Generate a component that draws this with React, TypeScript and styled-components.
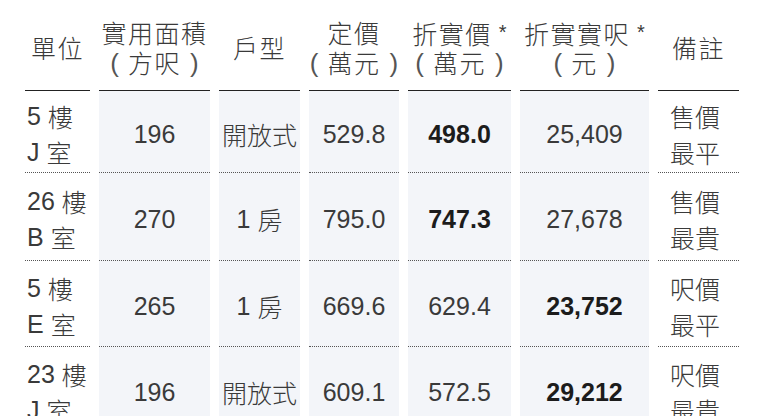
import React from 'react';
import styled, { createGlobalStyle } from 'styled-components';

const GlobalStyle = createGlobalStyle`
  * {
    box-sizing: border-box;
    margin: 0;
    padding: 0;
  }

  body {
    font-family: 'Liberation Sans', 'Noto Sans CJK TC', sans-serif;
    background-color: #ffffff;
    color: #333;
    overflow: hidden;
  }
`;

const Page = styled.div`
  width: 762px;
  height: 416px;
  overflow: hidden;
  padding-left: 25px;
`;

const Table = styled.div`
  display: grid;
  grid-template-columns: 65px 111px 81px 90px 103px 129px 81px;
  column-gap: 9px;
`;

const HeadCell = styled.div`
  height: 91px;
  padding-top: 4px;
  border-bottom: 1px solid #222;
  display: flex;
  flex-direction: column;
  align-items: center;
  justify-content: center;
  font-family: 'Noto Sans CJK TC', sans-serif;
  font-weight: 300;
  font-size: 25px;
  line-height: 30px;
  letter-spacing: 1.5px;
  color: #3a3a3a;
  white-space: nowrap;
`;

const HeadLine = styled.span`
  display: block;
  height: 30px;
`;

const Paren = styled.span`
  font-family: 'Liberation Sans', sans-serif;
  font-weight: 300;
  font-size: 26px;
  letter-spacing: 0;
  color: #555;
  margin: 0 9px;
  vertical-align: 1px;
`;

const Star = styled.span`
  font-family: 'Liberation Sans', sans-serif;
  font-size: 20px;
  letter-spacing: 0;
  vertical-align: 5px;
  margin-left: 7px;
`;

const Cell = styled.div<{ $shaded?: boolean; $align?: string; $h: number }>`
  height: ${(p) => p.$h}px;
  padding-top: 6px;
  border-bottom: 1px dotted #555;
  background-color: ${(p) => (p.$shaded ? '#f3f5f9' : '#ffffff')};
  display: flex;
  align-items: center;
  justify-content: ${(p) => p.$align || 'center'};
  padding-left: ${(p) => (p.$align === 'flex-start' ? '2px' : '0')};
  font-size: 25px;
  line-height: 1;
  color: #383838;
  white-space: nowrap;
`;

const Stack = styled.div<{ $indent?: number }>`
  display: flex;
  flex-direction: column;
  gap: 11px;
  padding-left: ${(p) => p.$indent || 0}px;
`;

const Line = styled.span`
  display: flex;
  align-items: center;
  height: 25px;
`;

const Han = styled.span`
  font-family: 'Noto Sans CJK TC', sans-serif;
  font-weight: 300;
  color: #3a3a3a;
  line-height: 1;
`;

const Num = styled.span<{ $bold?: boolean; $gap?: boolean }>`
  font-family: 'Liberation Sans', sans-serif;
  font-weight: ${(p) => (p.$bold ? 700 : 400)};
  color: ${(p) => (p.$bold ? '#1c1c1c' : '#3a3a3a')};
  line-height: 1;
  margin-right: ${(p) => (p.$gap ? '7px' : '0')};
`;

type Row = {
  h: number;
  floor: string;
  room: string;
  area: string;
  type: string;
  price: string;
  net: string;
  netBold: boolean;
  psf: string;
  psfBold: boolean;
  note: [string, string];
};

const rows: Row[] = [
  { h: 82, floor: '5', room: 'J', area: '196', type: '開放式', price: '529.8', net: '498.0', netBold: true, psf: '25,409', psfBold: false, note: ['售價', '最平'] },
  { h: 88, floor: '26', room: 'B', area: '270', type: '1 房', price: '795.0', net: '747.3', netBold: true, psf: '27,678', psfBold: false, note: ['售價', '最貴'] },
  { h: 86, floor: '5', room: 'E', area: '265', type: '1 房', price: '669.6', net: '629.4', netBold: false, psf: '23,752', psfBold: true, note: ['呎價', '最平'] },
  { h: 86, floor: '23', room: 'J', area: '196', type: '開放式', price: '609.1', net: '572.5', netBold: false, psf: '29,212', psfBold: true, note: ['呎價', '最貴'] },
];

const TypeText: React.FC<{ value: string }> = ({ value }) => {
  if (value.startsWith('1 ')) {
    return (
      <Line>
        <Num $gap>1</Num>
        <Han>{value.slice(2)}</Han>
      </Line>
    );
  }
  return <Han>{value}</Han>;
};

const Unit: React.FC<{ text: string }> = ({ text }) => (
  <HeadLine>
    <Paren>(</Paren>
    {text}
    <Paren>)</Paren>
  </HeadLine>
);

export default function App() {
  return (
    <>
      <GlobalStyle />
      <Page>
        <Table>
          <HeadCell>單位</HeadCell>
          <HeadCell>
            <HeadLine>實用面積</HeadLine>
            <Unit text="方呎" />
          </HeadCell>
          <HeadCell>戶型</HeadCell>
          <HeadCell>
            <HeadLine>定價</HeadLine>
            <Unit text="萬元" />
          </HeadCell>
          <HeadCell>
            <HeadLine>
              折實價<Star>*</Star>
            </HeadLine>
            <Unit text="萬元" />
          </HeadCell>
          <HeadCell>
            <HeadLine>
              折實實呎<Star>*</Star>
            </HeadLine>
            <Unit text="元" />
          </HeadCell>
          <HeadCell>備註</HeadCell>

          {rows.map((r, i) => (
            <React.Fragment key={i}>
              <Cell $h={r.h} $align="flex-start">
                <Stack>
                  <Line>
                    <Num $gap>{r.floor}</Num>
                    <Han>樓</Han>
                  </Line>
                  <Line>
                    <Num $gap>{r.room}</Num>
                    <Han>室</Han>
                  </Line>
                </Stack>
              </Cell>
              <Cell $h={r.h} $shaded>
                <Num>{r.area}</Num>
              </Cell>
              <Cell $h={r.h} $shaded>
                <TypeText value={r.type} />
              </Cell>
              <Cell $h={r.h} $shaded>
                <Num>{r.price}</Num>
              </Cell>
              <Cell $h={r.h} $shaded>
                <Num $bold={r.netBold}>{r.net}</Num>
              </Cell>
              <Cell $h={r.h} $shaded>
                <Num $bold={r.psfBold}>{r.psf}</Num>
              </Cell>
              <Cell $h={r.h} $align="flex-start">
                <Stack $indent={10}>
                  <Line>
                    <Han>{r.note[0]}</Han>
                  </Line>
                  <Line>
                    <Han>{r.note[1]}</Han>
                  </Line>
                </Stack>
              </Cell>
            </React.Fragment>
          ))}
        </Table>
      </Page>
    </>
  );
}
